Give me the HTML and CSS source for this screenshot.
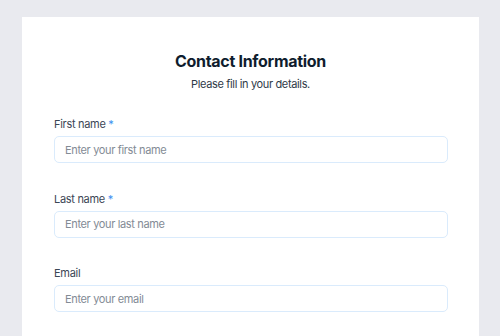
FILE: index.html
```html
<!DOCTYPE html>
<html lang="en">
<head>
<meta charset="utf-8">
<title>Contact Information</title>
<link rel="stylesheet" href="styles.css">
</head>
<body>
<main class="page">
  <form class="card">
    <header class="head">
      <h1 class="title">Contact Information</h1>
      <p class="subtitle">Please fill in your details.</p>
    </header>
    <div class="field">
      <label class="label" for="fn">First name <span class="req">*</span></label>
      <input class="input" id="fn" type="text" placeholder="Enter your first name">
    </div>
    <div class="field">
      <label class="label" for="ln">Last name <span class="req">*</span></label>
      <input class="input" id="ln" type="text" placeholder="Enter your last name">
    </div>
    <div class="field">
      <label class="label" for="em">Email</label>
      <input class="input" id="em" type="email" placeholder="Enter your email">
    </div>
  </form>
</main>
</body>
</html>
```
FILE: styles.css
```css
* { box-sizing: border-box; }
html, body { margin: 0; height: 100%; }
body {
  background: #e9eaef;
  font-family: "Inter", "Noto Sans", sans-serif;
  overflow: hidden;
}
.page {
  padding: 17px 21px 0 22px;
  height: 100%;
}
.card {
  background: #ffffff;
  height: 100%;
  padding: 33px 32px 0 32px;
  display: flex;
  flex-direction: column;
}
.head {
  text-align: center;
  margin-bottom: 25px;
}
.title {
  margin: 0;
  font-size: 16px;
  font-weight: 700;
  color: #0f1d2e;
  line-height: 22px;
  letter-spacing: -0.3px;
}
.subtitle {
  margin: 4px 0 0;
  font-size: 11px;
  color: #2f3a48;
  line-height: 16px;
  letter-spacing: -0.35px;
}
.field {
  display: flex;
  flex-direction: column;
  gap: 4px;
  margin-bottom: 28.6px;
}
.label {
  font-size: 11px;
  color: #3b4655;
  line-height: 15px;
  letter-spacing: -0.3px;
}
.req { color: #3b8ff0; }
.input {
  width: 394px;
  height: 27px;
  border: 1px solid #daebfc;
  border-radius: 5px;
  padding: 0 10px;
  font: inherit;
  font-size: 11px;
  letter-spacing: -0.35px;
  color: #2f3a48;
  background: #fff;
  outline: none;
}
.input::placeholder { color: #838b95; }
```
